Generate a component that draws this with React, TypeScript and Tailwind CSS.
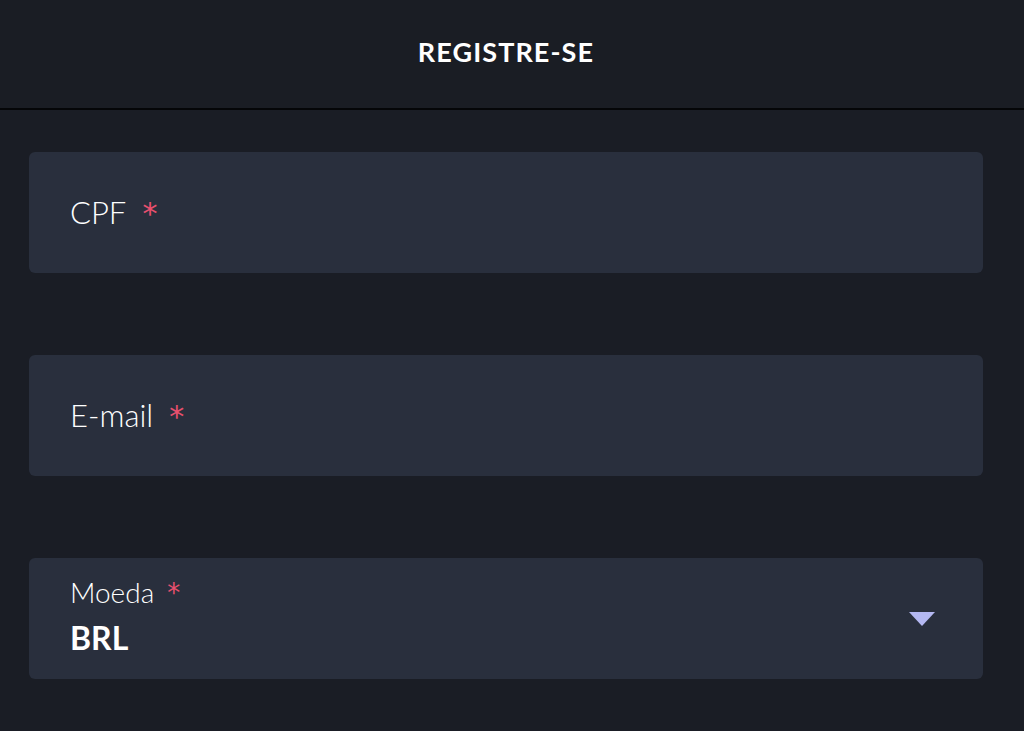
function Star({ size = 30, gap = 16 }: { size?: number; gap?: number }) {
  return (
    <span
      className="inline-block translate-y-[1px] font-['DejaVu_Sans',sans-serif] leading-none text-[#e8506e]"
      style={{ fontSize: size, marginLeft: gap }}
    >
      *
    </span>
  )
}

export default function App() {
  return (
    <div className="min-h-[731px] w-full bg-[#1a1d25] font-['Lato',sans-serif]">
      <header className="flex h-[110px] items-center justify-center border-b-2 border-[#050608] bg-[#1a1d24] pb-[4px] pr-[12px]">
        <h1 className="text-[27px] font-bold tracking-[0.04em] text-white">REGISTRE-SE</h1>
      </header>
      <div className="flex flex-col gap-[82px] pl-[29px] pr-[41px] pt-[42px]">
        <div className="flex h-[121px] items-center rounded-md bg-[#292f3d] px-[41px]">
          <span className="text-[31px] font-light text-white">CPF</span>
          <Star />
        </div>
        <div className="flex h-[121px] items-center rounded-md bg-[#292f3d] px-[41px]">
          <span className="text-[31px] font-light text-white">E-mail</span>
          <Star />
        </div>
        <div className="flex h-[121px] items-center justify-between rounded-md bg-[#292f3d] pl-[41px] pr-[48px]">
          <div className="flex flex-col pb-[6px]">
            <div className="flex items-center leading-none">
              <span className="text-[28px] font-light text-white">Moeda</span>
              <Star size={26} gap={13} />
            </div>
            <span className="mt-[16px] text-[32px] font-bold leading-none text-white">BRL</span>
          </div>
          <svg width="26" height="14" viewBox="0 0 26 14">
            <path d="M0 0 L26 0 L13 14 Z" fill="#b4b8f2" />
          </svg>
        </div>
      </div>
    </div>
  )
}
